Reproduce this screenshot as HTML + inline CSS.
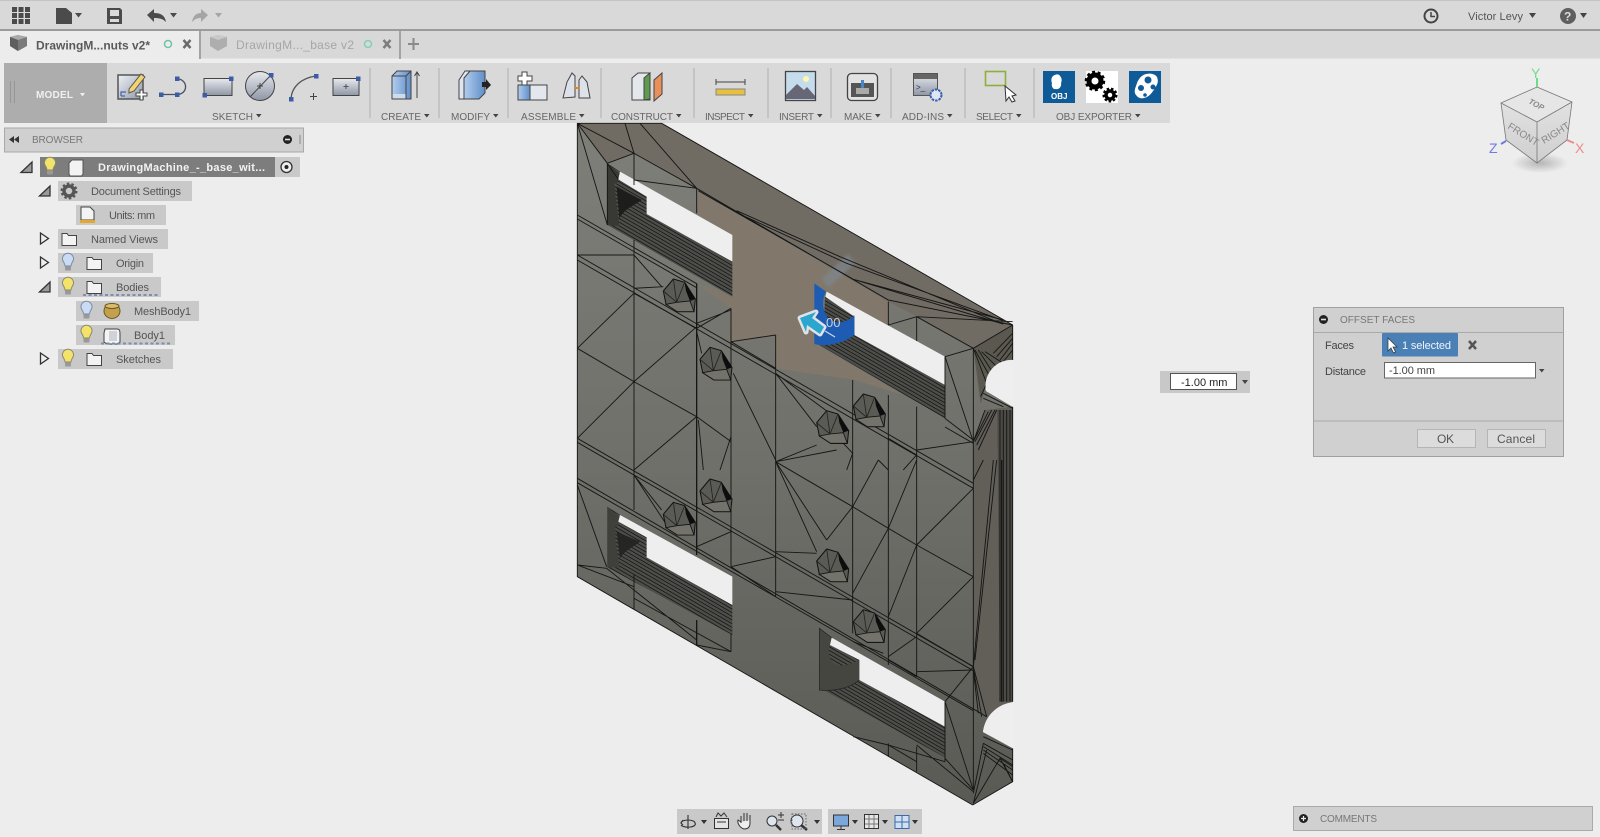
<!DOCTYPE html>
<html><head><meta charset="utf-8"><style>
html,body{margin:0;padding:0;background:#ededed;width:1600px;height:837px;overflow:hidden}
svg{display:block}
text{font-family:"Liberation Sans",sans-serif;font-size:11px;fill:#555}
.tb{fill:#666;font-size:10px;text-anchor:start}
.t{fill:#555}
</style></head><body>
<svg width="1600" height="837" viewBox="0 0 1600 837" xmlns="http://www.w3.org/2000/svg">
<defs>
<linearGradient id="body" gradientUnits="userSpaceOnUse" x1="0" y1="123" x2="0" y2="805"><stop offset="0" stop-color="#7f7f79"/><stop offset=".5" stop-color="#70706a"/><stop offset="1" stop-color="#5a5a54"/></linearGradient>
<linearGradient id="bl" x1="0" y1="0" x2="1" y2="1"><stop offset="0" stop-color="#eef1f6"/><stop offset="1" stop-color="#8f97a8"/></linearGradient>
<linearGradient id="bl2" x1="0" y1="0" x2="0" y2="1"><stop offset="0" stop-color="#e8eaee"/><stop offset="1" stop-color="#8f96a6"/></linearGradient>
<linearGradient id="blb" x1="0" y1="0" x2="1" y2="0"><stop offset="0" stop-color="#b3cdee"/><stop offset="1" stop-color="#5f8fc8"/></linearGradient>
<radialGradient id="shd"><stop offset="0" stop-color="#b5b5b5"/><stop offset="1" stop-color="#ededed"/></radialGradient>
<linearGradient id="cube" x1="0" y1="0" x2="0" y2="1"><stop offset="0" stop-color="#e6e6e6"/><stop offset="1" stop-color="#cfcfcf"/></linearGradient>
<filter id="soft" x="-30%" y="-30%" width="160%" height="160%"><feGaussianBlur stdDeviation="5"/></filter>
<pattern id="rib" width="40" height="11" patternUnits="userSpaceOnUse" patternTransform="skewY(30)"><rect width="40" height="11" fill="#4d4d49"/><rect width="40" height="2.600" fill="#141414"/></pattern>
<g id="nut"><path d="M-50-12L-20-48 14-38 46 12 42 50-8 50-42 28Z" fill="#5b5b55" stroke="#111" stroke-width="3"/><path d="M14-38L46 12 30 18 18-12Z" fill="#0d0d0d"/><path d="M-42 28L-8 50 42 50 30 18-10 22Z" fill="#73736b" stroke="#111" stroke-width="2.500"/><path d="M-50-12L-10 22M-20-48L-10 22M14-38L-10 22" stroke="#222" stroke-width="2.500" fill="none"/></g>
<g id="bY"><path transform="translate(0 3)" d="M-5-4a5.500 5.500 0 1 1 10 0c-1 2-2 3-2 5h-6c0-2-1-3-2-5z" fill="#f4e36b" stroke="#8a8a70"/><rect x="-3" y="4.500" width="6" height="4" rx="1" fill="#999"/></g>
<g id="bB"><path transform="translate(0 3)" d="M-5-4a5.500 5.500 0 1 1 10 0c-1 2-2 3-2 5h-6c0-2-1-3-2-5z" fill="#c9dcf4" stroke="#7f8aa0"/><rect x="-3" y="4.500" width="6" height="4" rx="1" fill="#999"/></g>
<path id="fo" d="M0 1.500h5l1.500 2h8v10h-14.500z" fill="#f3f3f3" stroke="#444" stroke-width="1"/>
</defs>

<!-- top bars -->
<rect width="1600" height="30" fill="#d9d9d9"/><rect y="0" width="1600" height="1" fill="#c4c4c4"/>
<rect y="29" width="1600" height="2.500" fill="#9b9b9b"/>
<rect y="31" width="1600" height="27.500" fill="#d8d8d8"/>
<rect y="31" width="199" height="27.500" fill="#ececec"/>
<rect x="199" y="31" width="2" height="28" fill="#a3a3a3"/><rect x="399" y="31" width="2" height="28" fill="#a3a3a3"/>

<g fill="#4b4b4b"><rect x="12" y="7" width="5" height="5"/><rect x="18.500" y="7" width="5" height="5"/><rect x="25" y="7" width="5" height="5"/><rect x="12" y="13" width="5" height="5"/><rect x="18.500" y="13" width="5" height="5"/><rect x="25" y="13" width="5" height="5"/><rect x="12" y="19" width="5" height="5"/><rect x="18.500" y="19" width="5" height="5"/><rect x="25" y="19" width="5" height="5"/>
<path d="M56 8h10l6 5v11h-16z"/><path d="M75 13h7l-3.500 4.500z"/>
<path fill-rule="evenodd" d="M107 8h13l2 2v14h-15zM110 10v6h9v-6zM110 19v3h9v-3z"/>
<path d="M147 15l7-6v4c6 0 11 2 12 9-3-3-6-4-12-4v4z"/><path d="M170 13h7l-3.500 4.500z"/></g>
<g fill="#a5a5a5"><path d="M208 15l-7-6v4c-5 0-8 3-9 9 3-3 5-4 9-4v4z"/><path d="M215 13h7l-3.500 4.500z"/></g>

<path d="M10 37l8-2 9 2v9l-9 5-8-5z" fill="#7a7a7a"/><path d="M10 37l8 3 9-3-9-2z" fill="#aaa"/><path d="M18 40v11l-8-5v-9z" fill="#5f5f5f"/>
<text x="36" y="49.500" textLength="114" style="font-size:12px;font-weight:bold;fill:#5a5a5a">DrawingM...nuts v2*</text>
<circle cx="168" cy="44" r="3.500" fill="none" stroke="#6cc4a8" stroke-width="1.500"/>
<path d="M183.500 40l7 8m0-8l-7 8" stroke="#6a6a6a" stroke-width="2.500"/>
<path d="M210 37l8-2 9 2v9l-9 5-8-5z" fill="#aeaeae"/><path d="M210 37l8 3 9-3-9-2z" fill="#c9c9c9"/>
<text x="236" y="49" textLength="118" style="font-size:12px;fill:#a6a6a6">DrawingM..._base v2</text>
<circle cx="368" cy="44" r="3.500" fill="none" stroke="#7fd0b5" stroke-width="1.500"/>
<path d="M383.500 40l7 8m0-8l-7 8" stroke="#7d7d7d" stroke-width="2.500"/>
<path d="M413.500 38v12M408 44h11" stroke="#8a8a8a" stroke-width="2"/>

<g><circle cx="1431" cy="16" r="6.500" fill="none" stroke="#444" stroke-width="2"/><path d="M1431 12v4.500h4" fill="none" stroke="#444" stroke-width="1.500"/>
<text x="1468" y="20" textLength="55" style="font-size:11px;fill:#555">Victor Levy</text><path d="M1529 13h7l-3.500 5z" fill="#444"/>
<circle cx="1568" cy="16" r="8" fill="#5f5f5f"/><text x="1564" y="20.500" style="font-size:12px;font-weight:bold;fill:#ddd">?</text><path d="M1580 13h7l-3.500 5z" fill="#444"/></g>

<!-- toolbar -->
<rect x="4" y="63" width="1166" height="60" fill="#d9d9d9"/>
<rect x="4" y="63" width="103" height="60" fill="#adadad"/>
<path d="M10.500 81v22M14.500 81v22" stroke="#969696"/>
<text x="36" y="98" textLength="37" style="font-size:10px;font-weight:bold;fill:#f0f0f0">MODEL</text><path d="M80 93h5l-2.500 3.500z" fill="#eee"/>
<g stroke="#bdbdbd" stroke-width="1.500"><path d="M370 68v50M439 68v50M508 68v50M601 68v50M694 68v50M768 68v50M831 68v50M891 68v50M965 68v50M1034 68v50"/></g>

<!-- sketch icons -->
<rect x="118" y="75" width="25" height="24" fill="url(#bl)" stroke="#555" stroke-width="1.500"/>
<path d="M121 96V92h5M121 96h4" stroke="#4a66b0" fill="none" stroke-width="1.300"/>
<path d="M129 89l12-15 4 3-11 14-5 2z" fill="#f1d46e" stroke="#555"/>
<path d="M136 93h4v-3h3v3h4v3h-4v4h-3v-4h-4z" fill="#fff" stroke="#444"/>
<path d="M161 94.500h16M177 94.500c11 0 12-15-.5-16" fill="none" stroke="#46505f" stroke-width="1.300"/>
<g fill="#3d5ca8"><rect x="159" y="92.500" width="4.500" height="4.500"/><rect x="175" y="92.500" width="4.500" height="4.500"/><rect x="175" y="76.500" width="4.500" height="4.500"/></g>
<rect x="204" y="78.500" width="28" height="17" fill="url(#bl2)" stroke="#444"/><rect x="229" y="76.500" width="4.500" height="4.500" fill="#3d5ca8"/><rect x="202.500" y="93" width="4.500" height="4.500" fill="#3d5ca8"/>
<circle cx="260" cy="86" r="14.500" fill="url(#bl2)" stroke="#444"/><path d="M250 97l21-22" stroke="#444"/><path d="M260 83v6m-3-3h6" stroke="#444"/><rect x="269" y="73" width="4.500" height="4.500" fill="#3d5ca8"/>
<path d="M291 98c1-11 10-20 25-22" fill="none" stroke="#555" stroke-width="1.300"/><rect x="289" y="97" width="4.500" height="4.500" fill="#3d5ca8"/><rect x="314" y="74" width="4.500" height="4.500" fill="#3d5ca8"/><path d="M313.500 93v7M310 96.500h7" stroke="#444"/>
<rect x="333" y="78.500" width="26" height="17" fill="url(#bl2)" stroke="#444"/><path d="M346 84v5m-2.500-2.500h5" stroke="#555"/><rect x="356" y="76.500" width="4.500" height="4.500" fill="#3d5ca8"/>

<!-- create -->
<path d="M392 76l5-5h14v28h-19z" fill="url(#blb)" stroke="#444"/><path d="M392 76h14v23M406 76l5-5" fill="none" stroke="#444"/><rect x="392.500" y="94" width="13" height="4.500" fill="#cfdcee"/><path d="M417 72v26M414.500 76l2.500-4 2.500 4" stroke="#444" fill="none"/>
<!-- modify -->
<path d="M459 80l6-9h8v28h-14z" fill="#dfe6f0" stroke="#444"/><path d="M464 78l6-7h15v22l-6 6h-15z" fill="url(#blb)" stroke="#444"/><path d="M482 82h4v-3l5 6-5 5v-3h-4z" fill="#222"/>
<!-- assemble -->
<rect x="518" y="85" width="12" height="15" fill="url(#blb)" stroke="#444"/><rect x="530" y="85" width="17" height="15" fill="#e3e7ee" stroke="#444"/><path d="M522 72h5v4h5v5h-5v4h-5v-4h-4v-5h4z" fill="#fff" stroke="#444"/>
<path d="M563 98l4-16 5-9 3 3v21zM590 98l-3-16-5-6-3 4v18z" fill="#dde2ea" stroke="#444"/><path d="M574 88h6" stroke="#d68a2a" stroke-width="2"/>
<!-- construct -->
<path d="M632 78l6-5h12v27h-18z" fill="#e4e7ec" stroke="#444"/><path d="M644 78l6-5v26l-6 1z" fill="#5f9a50" stroke="#444"/><path d="M654 80l8-7v21l-8 7z" fill="#e8905a" stroke="#444"/>
<!-- inspect -->
<path d="M716 82h29M716 79v6M745 79v6" stroke="#444" fill="none"/><rect x="716" y="89" width="29" height="6" fill="#e8c040" stroke="#888"/>
<!-- insert -->
<rect x="785.500" y="71.500" width="30" height="29" fill="#c5dced" stroke="#444" stroke-width="1.300"/><circle cx="806" cy="79" r="3" fill="#fff6b0"/><path d="M786 95l11-11 7 6 3-3 8 9v3h-29z" fill="#667"/>
<!-- make -->
<rect x="847.500" y="73.500" width="30" height="27" rx="4" fill="#e2e2e2" stroke="#444" stroke-width="1.300"/><rect x="851" y="83" width="23" height="14" fill="#555"/><rect x="856" y="88" width="13" height="6" fill="#aaa"/><path d="M862.500 80v8" stroke="#4a85c5" stroke-width="3"/>
<!-- add-ins -->
<rect x="913.500" y="73.500" width="24" height="22" fill="url(#bl2)" stroke="#555"/><rect x="914" y="74" width="23" height="5" fill="#666"/><text x="916" y="90" style="font-size:8px;fill:#333">&gt;_</text><circle cx="936" cy="95" r="5.500" fill="#dce6f3" stroke="#3d5ca8" stroke-width="2" stroke-dasharray="2.500 1"/>
<!-- select -->
<rect x="985.500" y="71.500" width="20" height="14" fill="none" stroke="#8eae3e" stroke-width="1.600"/><path d="M1005 86l1 15 3-4 3 5 3-1-3-5 4-1z" fill="#fff" stroke="#333"/>
<!-- obj -->
<rect x="1043" y="71" width="32" height="32" fill="#0f5b98"/><path d="M1053 76c4-3 7-1 7 0 2 2 2 5 1 7 1 3-2 7-5 6-3 1-5-3-4-6-1-2-1-5 1-7z" fill="#fff"/><text x="1051" y="99" style="font-size:8px;font-weight:bold;fill:#fff">OBJ</text>
<rect x="1086" y="71" width="32" height="32" fill="#fff"/><circle cx="1095" cy="81" r="6" fill="none" stroke="#000" stroke-width="5"/><circle cx="1095" cy="81" r="9" fill="none" stroke="#000" stroke-width="2.500" stroke-dasharray="3 2.600"/><circle cx="1110" cy="95" r="4" fill="none" stroke="#000" stroke-width="3.500"/><circle cx="1110" cy="95" r="6.500" fill="none" stroke="#000" stroke-width="2" stroke-dasharray="2.500 2"/>
<rect x="1129" y="71" width="32" height="32" fill="#0f5b98"/><path d="M1136 95c-3-4 0-8 1-12 2-5 5-8 9-9 5-1 9 0 11 3 2 5 0 8-2 11-3 5-6 9-11 10-3 1-6 0-8-3z" fill="#fff"/><circle cx="1148" cy="80" r="3.500" fill="#0f5b98"/><circle cx="1141" cy="88" r="3" fill="#0f5b98"/><circle cx="1153" cy="87" r="2.500" fill="#0f5b98"/><circle cx="1145" cy="95" r="1.800" fill="#0f5b98"/>

<g style="fill:#666">
<text class="tb" x="212" y="120" textLength="41">SKETCH</text>
<text class="tb" x="381" y="120" textLength="40">CREATE</text>
<text class="tb" x="451" y="120" textLength="39">MODIFY</text>
<text class="tb" x="521" y="120" textLength="55">ASSEMBLE</text>
<text class="tb" x="611" y="120" textLength="62">CONSTRUCT</text>
<text class="tb" x="705" y="120" textLength="40">INSPECT</text>
<text class="tb" x="779" y="120" textLength="35">INSERT</text>
<text class="tb" x="844" y="120" textLength="28">MAKE</text>
<text class="tb" x="902" y="120" textLength="42">ADD-INS</text>
<text class="tb" x="976" y="120" textLength="37">SELECT</text>
<text class="tb" x="1056" y="120" textLength="76">OBJ EXPORTER</text>
</g>
<g fill="#444"><path d="M256 114h5.500l-2.700 3.500zM424 114h5.500l-2.700 3.500zM493 114h5.500l-2.700 3.500zM579 114h5.500l-2.700 3.500zM676 114h5.500l-2.700 3.500zM748 114h5.500l-2.700 3.500zM817 114h5.500l-2.700 3.500zM875 114h5.500l-2.700 3.500zM947 114h5.500l-2.700 3.500zM1016 114h5.500l-2.700 3.500zM1135 114h5.500l-2.700 3.500z"/></g>

<!-- MODEL GEOMETRY -->
<path d="M577 123H662L1013 325V360A26 26 0 0 0 986 391L1013 407V702A34 34 0 0 0 983 732L1013 748V782L973 805 577 577Z" fill="url(#body)"/>
<g transform="translate(570 120) scale(.33333)">
<!-- top band -->
<path d="M22 10H275L1328 615 1210 685 1040 590 955 545 380 205 192 100 112 130Z" fill="#716c63"/>
<!-- tan -->
<path d="M385 215L955 545V615L770 515 735 490V670L1000 825 848 778 617 745V645L483 665V565L380 490 487 530V345L380 280Z" fill="#81786b"/>
<!-- blurred strip -->
<path d="M765 490L845 415" stroke="#7f858b" stroke-width="34" opacity=".75" filter="url(#soft)"/>
<!-- right column -->
<path d="M1210 965L1245 870 1328 860V1745L1240 1790 1210 1640Z" fill="#625f58"/>
<path d="M1210 685L1328 615V720L1250 790 1232 850Z" fill="#5b5850"/>
<path d="M1282 870H1328V1745H1290Z" fill="#4c4a44"/>
<!-- slot channels -->
<path d="M112 130L150 155 145 178 230 230 230 282 487 425 487 530 112 315Z" fill="url(#rib)"/>
<path d="M112 130L148 160 135 220 148 318 112 315Z" fill="#383834"/>
<path d="M133 190L228 232V280C190 288 160 300 148 318Z" fill="url(#rib)"/>
<path d="M140 200L215 240C195 255 165 265 148 295Z" fill="#1d1d1b"/>
<path d="M740 670L853 640 1125 795V895Z" fill="url(#rib)"/>
<g transform="translate(0 1020)">
<path d="M112 140L150 165 145 185 230 232 230 292 487 435 487 525 112 322Z" fill="url(#rib)"/>
<path d="M112 140L148 170 135 230 148 322 112 322Z" fill="#3f3f3b"/>
<path d="M135 200L228 238V290C190 295 160 305 150 318Z" fill="url(#rib)"/>
<path d="M140 215L210 245C190 262 165 270 150 295Z" fill="#252523"/>
<path d="M760 690L868 655 1125 800V892Z" fill="url(#rib)"/>
<path d="M748 505L785 533 868 600V660C840 685 790 695 748 690Z" fill="#464641" stroke="#222" stroke-width="2"/>
<path d="M778 553C770 600 790 640 868 600Z" fill="url(#rib)"/>
</g>
<!-- white holes -->
<g fill="#eeeeee">
<path d="M150 155L487 345V425L230 282V230L145 178Z"/>
<path d="M770 515L1125 710V795L853 645V590L765 535Z"/>
<path d="M150 1185L487 1370V1455L230 1312V1252L145 1205Z"/>
<path d="M785 1553L1125 1745V1820L868 1680V1620L780 1575Z"/>
</g>
<!-- blue -->
<path d="M765 530L853 590V645L760 665Z" fill="url(#rib)"/>
<path d="M733 490L768 515C752 545 758 590 790 605 815 612 840 600 853 585V645C820 670 770 682 733 672Z" fill="#1e5cb3"/>
<!-- mesh -->
<g fill="none" stroke="#161616" stroke-width="2.800">
<path d="M22 10V1370L1208 2055M22 10H275L1328 615V720M1328 860V1745M1328 1885V1985L1208 2055"/>
<path d="M22 285L380 491M22 297L380 503M1125 921L1210 970M22 405L1210 1090M22 420L1210 1105M22 955L1210 1640M22 967L1210 1652M22 1075L1250 1790M22 1088L1210 1772"/>
<path d="M192 100V195M192 360V1170M192 1365V1468M380 205V280M483 565V665M483 665V1340M483 1540V1595M617 645V1430M848 780V1540M955 545V615M955 825V1635M1040 590V663M1040 860V1670M955 1870V1910M1040 1880V1955M1125 710V895M1125 1745V1925M1210 685V2010"/>
<path d="M380 490V1305M380 1500V1575" stroke-width="4"/>
<path d="M22 10L112 315M22 10L112 130M22 10L192 100M165 10L192 100M210 10L380 205M192 100L380 205M112 130L192 100M192 180L380 205M112 130V315M112 130L145 178"/>
<path d="M380 205L955 540 1328 615M385 212L850 478 1300 612M500 278L830 430 1300 602M500 272L810 410 1280 605M850 478L1300 600M1040 590L1328 605M955 615L1040 590M1040 590L1210 685M1125 710L1210 685M1210 685L1328 615"/>
<path d="M22 405H192M192 405L275 500M192 505L280 500M22 685L192 520M192 520L380 625M22 685L192 785M192 785L380 620M192 785L380 890M22 955L192 785M192 1050L380 890M380 890L483 965M380 625L483 565M380 610L483 570M483 665L617 645M483 665L617 745M380 635L395 700M490 760L617 1020M483 950L450 1050M385 900L400 1050"/>
<path d="M617 760L740 920M617 760L780 880M617 1025L740 975M617 1025L800 990M848 1000L820 970M848 1000L830 1050M955 955L1040 1005M1040 990L1210 965M1125 895L1210 960M1125 710L1210 965M955 1050L925 1020M1040 1005L1000 1050"/>
<g transform="translate(0 1020)">
<path d="M22 75L110 320M22 315L110 325M22 315L192 380M110 325L380 540M192 415L483 575M380 555L483 575M192 45L275 150M192 45L300 210M380 260L483 215M483 320L617 290M483 320L617 410M617 5L740 275M617 5L770 240M617 5L848 140M617 275L740 280M617 395L848 420M848 140L770 240M848 140L955 205M955 205L1040 255M1040 255L1210 350M955 205L848 400M1040 0L955 205M1040 255L955 470M1040 520L1210 350M1040 255L1210 85M848 140L925 0M1040 520L1210 620M1040 530L955 590M955 600L1040 650M1040 635L1210 630M850 830L955 855M955 855L1125 905M955 855L1040 905M850 545L940 580M1125 725L1210 990M1125 725L1210 620M1125 895L1210 990M1040 855L1210 995"/>
<path d="M1210 620L1250 770M1210 625L1235 770M1210 630L1225 760M1210 1000L1240 850M1210 1030L1250 870M1210 1030L1290 895 1328 965M1240 830L1328 870"/>
<path d="M1210 60L1240 0M1210 620L1270 0M1215 600L1280 0M1290 0V725M1300 0V725M1310 0V725M1320 0V725"/>
<path d="M1295 0V725" stroke-width="4"/>
<path d="M1240 850L1328 900M1240 860L1328 915M1240 870L1328 930M1240 880L1328 945M1290 895L1328 920M1300 910L1328 965"/>
</g>
<path d="M1210 965L1245 870M1210 965L1255 875M1215 965L1265 870M1220 975L1275 870M1225 990L1280 870M1290 870V1020M1300 870V1020M1310 870V1020M1320 870V1020"/>
<path d="M1210 685L1250 790M1215 690L1260 770M1225 690L1270 760M1235 695L1285 745M1245 695L1300 730M1328 640L1270 700M1328 655L1280 710M1328 670L1290 720M1328 690L1300 725M1240 820L1328 865M1240 835L1300 860M1232 830L1250 790"/>
</g>
<use href="#nut" x="330" y="525"/><use href="#nut" x="440" y="730"/><use href="#nut" x="790" y="920"/><use href="#nut" x="900" y="870"/>
<use href="#nut" x="330" y="1195"/><use href="#nut" x="440" y="1125"/><use href="#nut" x="790" y="1335"/><use href="#nut" x="900" y="1517"/>
</g>
<!-- round notches -->
<path d="M1014 360A26 26 0 0 0 986 391L1014 407.500Z" fill="#eeeeee"/>
<path d="M1014 702A34 34 0 0 0 983 732L1014 749Z" fill="#eeeeee"/>
<!-- arrow on model -->
<text x="826" y="327" style="font-size:13px;fill:#c4cfdf">00</text>
<path d="M825 331l10 6" stroke="#cfd8e6" stroke-width="1.200"/>
<path d="M800 318L816 312 812 318 824 327 820 334 807 325 806 332Z" fill="#2aa6cf" stroke="#dfe3e6" stroke-width="5" stroke-linejoin="round" paint-order="stroke"/>

<!-- browser -->
<rect x="4.500" y="128" width="299" height="24" fill="#d0d0d0" stroke="#a8a8a8"/>
<path d="M14 136l-5 3.500 5 3.500zM19 136l-5 3.500 5 3.500z" fill="#333"/>
<text x="32" y="143" textLength="51" style="font-size:10px;fill:#777">BROWSER</text>
<circle cx="287.500" cy="139.500" r="4.500" fill="#222"/><rect x="285" y="138.700" width="5" height="1.600" fill="#ddd"/>
<path d="M300 135v9" stroke="#888"/>

<rect x="40" y="157" width="260" height="20" fill="#c9c9c9"/><rect x="40" y="157" width="235" height="20" fill="#7d7d7d"/>
<path d="M32 172.500H21L32 162z" fill="#9a9a9a" stroke="#333" stroke-width="1.300"/>
<use href="#bY" x="50" y="166"/>
<path d="M69 163l3-3h11v14l-1.500 2H70l-1-2z" fill="#f2f2f2" stroke="#555"/>
<text x="98" y="171" textLength="167" style="font-size:11px;font-weight:bold;fill:#f2f2f2">DrawingMachine_-_base_wit...</text>
<circle cx="286.500" cy="167" r="5.500" fill="#eee" stroke="#333" stroke-width="1.300"/><circle cx="286.500" cy="167" r="2" fill="#222"/>

<g fill="#c9c9c9"><rect x="58" y="181" width="134" height="20"/><rect x="76" y="205" width="90" height="20"/><rect x="58" y="229" width="110" height="20"/><rect x="58" y="253" width="95" height="20"/><rect x="58" y="277" width="103" height="20"/><rect x="76" y="301" width="123" height="20"/><rect x="76" y="325" width="99" height="20"/><rect x="58" y="349" width="115" height="20"/></g>
<path d="M50 196H39.500L50 186zM50 292H39.500L50 282z" fill="#9a9a9a" stroke="#333" stroke-width="1.300"/>
<path d="M40.500 238l8 5.500-8 5.500zM40.500 262l8 5.500-8 5.500zM40.500 358l8 5.500-8 5.500z" transform="translate(0 -5)" fill="#eee" stroke="#333" stroke-width="1.300"/>
<circle cx="69" cy="191" r="5" fill="none" stroke="#555" stroke-width="3.500"/><circle cx="69" cy="191" r="7.500" fill="none" stroke="#555" stroke-width="2" stroke-dasharray="2.500 2.200"/>
<path d="M81 207h9l4 4v9H81z" fill="#f3f3f3" stroke="#444"/><rect x="80" y="220" width="15" height="3" fill="#e2a92e"/>
<use href="#fo" x="62" y="232"/><use href="#fo" x="87" y="256"/><use href="#fo" x="87" y="280"/><use href="#fo" x="87" y="352"/>
<use href="#bB" x="68" y="262"/><use href="#bY" x="68" y="286"/><use href="#bB" x="86.500" y="310"/><use href="#bY" x="86.500" y="334"/><use href="#bY" x="68" y="358"/>
<ellipse cx="112" cy="311" rx="8" ry="7.500" fill="#c2a04e" stroke="#6b5720"/><ellipse cx="112" cy="306" rx="7" ry="2.500" fill="#d9bd6c" stroke="#6b5720"/>
<path d="M105 329h12c3 0 3 2 3 6v7l-3 2h-10l-3-2v-9z" fill="#f4f4f4" stroke="#444"/><rect x="109" y="331" width="8" height="10" fill="#cfd2d6"/>
<path d="M83 295l75 0M101 343.500l70 0" stroke="#7f8eb0" stroke-width="2" stroke-dasharray="3 2.500"/>
<text x="91" y="195" textLength="90" style="fill:#555;font-size:11px">Document Settings</text>
<text x="109" y="219" textLength="46" style="fill:#555;font-size:11px">Units: mm</text>
<text x="91" y="243" textLength="67" style="fill:#555;font-size:11px">Named Views</text>
<text x="116" y="267" textLength="28" style="fill:#555;font-size:11px">Origin</text>
<text x="116" y="291" textLength="33" style="fill:#555;font-size:11px">Bodies</text>
<text x="134" y="315" textLength="57" style="fill:#555;font-size:11px">MeshBody1</text>
<text x="134" y="339" textLength="31" style="fill:#555;font-size:11px">Body1</text>
<text x="116" y="363" textLength="45" style="fill:#555;font-size:11px">Sketches</text>

<!-- viewcube -->
<ellipse cx="1540" cy="163" rx="28" ry="10" fill="url(#shd)"/>
<path d="M1537 87L1572 102 1567 140 1537 163 1506 140 1501 103Z" fill="url(#cube)"/>
<path d="M1537 87L1572 102 1537 122 1501 103Z" fill="#e6e6e6"/>
<path d="M1537 87L1572 102 1567 140 1537 163 1506 140 1501 103ZM1501 103L1537 122 1572 102M1537 122V163" fill="none" stroke="#777" stroke-width=".8"/>
<path d="M1537 87V78" stroke="#6ddc86" stroke-width="2"/><path d="M1506 141l-5 3" stroke="#6c7be0" stroke-width="2"/><path d="M1567 140l7 3" stroke="#ee8a8a" stroke-width="2"/>
<text x="1531" y="78" style="font-size:14px;fill:#74dd8c">Y</text>
<text x="1489" y="153" style="font-size:14px;fill:#6e7be6">Z</text>
<text x="1575" y="153" style="font-size:14px;fill:#ee8b8b">X</text>
<text x="1528" y="103" transform="rotate(28 1528 103)" style="font-size:8px;fill:#8a8a8a;font-style:italic;font-weight:bold">TOP</text>
<text x="1507" y="128" transform="rotate(32 1507 128)" style="font-size:10px;fill:#888">FRONT</text>
<text x="1544" y="144" transform="rotate(-32 1544 144)" style="font-size:10px;fill:#888">RIGHT</text>

<!-- small distance box -->
<rect x="1160" y="371" width="90" height="22" fill="#c8c8c8"/>
<rect x="1170.500" y="373.500" width="66" height="16" fill="#fff" stroke="#555"/>
<text x="1181" y="386" style="font-size:11px;fill:#222">-1.00 mm</text>
<path d="M1242 380h6l-3 4z" fill="#444"/>

<!-- dialog -->
<rect x="1313.500" y="307.500" width="250" height="149" fill="#d0d0d0" stroke="#a0a0a0"/>
<path d="M1314 332.500h249M1314 421h249" stroke="#aaa"/>
<circle cx="1323.500" cy="319.500" r="4.500" fill="#222"/><rect x="1321" y="318.700" width="5" height="1.600" fill="#ddd"/>
<text x="1340" y="323" textLength="75" style="font-size:10px;fill:#777">OFFSET FACES</text>
<text x="1325" y="349" textLength="29" style="font-size:11px;fill:#444">Faces</text>
<rect x="1382" y="333" width="76" height="23.500" rx="1" fill="#4a80b6"/>
<path d="M1388 338l0 13 3-3 2.500 5 2-1-2.500-5 4 0z" fill="#fff" stroke="#333" stroke-width=".7"/>
<text x="1402" y="349" textLength="49" style="font-size:11px;fill:#f0f4fa">1 selected</text>
<path d="M1469 341l7 8m0-8l-7 8" stroke="#555" stroke-width="2.500"/>
<text x="1325" y="375" textLength="41" style="font-size:11px;fill:#444">Distance</text>
<rect x="1384.500" y="362.500" width="151" height="15.500" fill="#fff" stroke="#666"/>
<text x="1389" y="374" textLength="46" style="font-size:11px;fill:#444">-1.00 mm</text>
<path d="M1539 369h5.500l-2.700 3.500z" fill="#444"/>
<rect x="1417.500" y="429.500" width="58" height="18" fill="#dcdcdc" stroke="#b5b5b5"/><rect x="1487.500" y="429.500" width="58" height="18" fill="#dcdcdc" stroke="#b5b5b5"/>
<text x="1437" y="443" textLength="17" style="font-size:12px;fill:#555">OK</text>
<text x="1497" y="443" textLength="38" style="font-size:12px;fill:#555">Cancel</text>

<!-- bottom toolbar -->
<rect x="677" y="809" width="145" height="25" fill="#c9c9c9"/><rect x="828" y="809" width="94" height="25" fill="#c9c9c9"/>
<g fill="none" stroke="#333">
<path d="M688 815v14M681 823a7 3 0 0 1 14 0 7 3 0 0 1-14 2M683 825l-2-2 2-3" stroke-width="1.100"/>
<rect x="714.500" y="818.500" width="14" height="10" fill="#e4e4e4"/><path d="M716 817l2-4 3 3 3-3 3 4M717 822h9"/>
<path d="M741 823v-7m3 5v-8m3 8v-8m3 8v-6m-9 7l-3-2c-1 3 2 8 6 9 4 0 6-2 6-6v-3" fill="#eee"/>
<circle cx="772" cy="821" r="5" fill="#dde5ee"/><path d="M776 825l5 5" stroke-width="2.500"/><path d="M778 815h6M781 812v6M778 820h6" stroke-width="1"/>
<circle cx="797" cy="821" r="6" fill="#dde5ee"/><path d="M801 825l6 5" stroke-width="2.500"/>
<rect x="792" y="814" width="14" height="15" stroke-dasharray="1.500 1.500" stroke="#666"/>
<rect x="833.500" y="815" width="15" height="11" fill="#7ba7dc"/><path d="M841 826v3M837 829.500h8"/>
<rect x="864.500" y="814.500" width="14" height="14" fill="#e6e6e6"/><path d="M869 815v13M874 815v13M865 819h13M865 824h13" stroke="#777"/>
<rect x="895" y="815.500" width="14" height="13" fill="#cfe0f4" stroke="#3c6aa8"/><path d="M902 816v12M895 822h14" stroke="#3c6aa8"/>
</g>
<path d="M701 820h6l-3 4zM814 820h6l-3 4zM852 820h6l-3 4zM882 820h6l-3 4zM912 820h6l-3 4z" fill="#333"/>

<!-- comments -->
<rect x="1293.500" y="806.500" width="299" height="24" fill="#d0d0d0" stroke="#aaa"/>
<circle cx="1303.500" cy="818.500" r="4.500" fill="#222"/><path d="M1303.500 816v5M1301 818.500h5" stroke="#eee" stroke-width="1.200"/>
<text x="1320" y="822" textLength="57" style="font-size:10px;fill:#777">COMMENTS</text>
</svg>
</body></html>
